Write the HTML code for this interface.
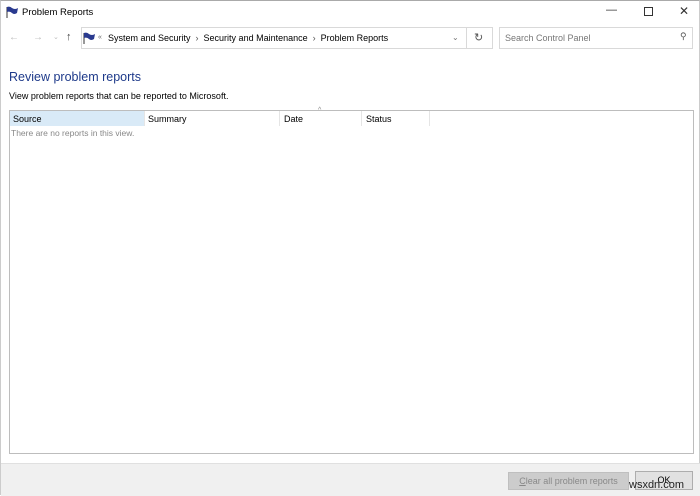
<!DOCTYPE html>
<html><head><style>
*{margin:0;padding:0;box-sizing:border-box}
body{width:700px;height:495px;overflow:hidden;background:#fff;font-family:"Liberation Sans",sans-serif;font-size:9px;color:#000;position:relative;border-top:1px solid #aaa;border-left:1px solid #ccc;border-right:1px solid #ccc}
.a{position:absolute}
</style></head><body>
<svg class="a" style="left:5px;top:5px" width="13" height="12" viewBox="0 0 13 12"><path d="M1 1 L1 12" stroke="#333" stroke-width="1"/><path d="M1 1 Q4 0 6 2 Q9 4 12 2 L11 7 Q8 9 6 7 Q4 5 1 6Z" fill="#2a3a8f"/></svg>
<div class="a" style="left:21px;top:6px;font-size:9.5px">Problem Reports</div>
<div class="a" style="left:605px;top:3px;font-size:11px;color:#333">—</div>
<div class="a" style="left:643px;top:6px;width:9px;height:9px;border:1px solid #333"></div>
<div class="a" style="left:678px;top:3px;font-size:12px;color:#333">✕</div>
<div class="a" style="left:8px;top:31px;color:#bbb;font-size:10px">←</div>
<div class="a" style="left:32px;top:31px;color:#bbb;font-size:10px">→</div>
<div class="a" style="left:52px;top:32px;color:#bbb;font-size:7px">⌄</div>
<div class="a" style="left:65px;top:30px;color:#444;font-size:11px">↑</div>
<div class="a" style="left:80px;top:26px;width:412px;height:22px;border:1px solid #d9d9d9"></div>
<div class="a" style="left:465px;top:26px;width:1px;height:22px;background:#d9d9d9"></div>
<svg class="a" style="left:82px;top:31px" width="13" height="12" viewBox="0 0 13 12"><path d="M1 1 L1 12" stroke="#333"/><path d="M1 1 Q4 0 6 2 Q9 4 12 2 L11 7 Q8 9 6 7 Q4 5 1 6Z" fill="#2a3a8f"/></svg>
<div class="a" style="left:97px;top:33px;font-size:7px;color:#666">«</div>
<div class="a" style="left:107px;top:32px">System and Security&nbsp; <span style="color:#555">›</span> &nbsp;Security and Maintenance&nbsp; <span style="color:#555">›</span> &nbsp;Problem Reports</div>
<div class="a" style="left:451px;top:32px;font-size:8px;color:#777">⌄</div>
<div class="a" style="left:473px;top:30px;font-size:11px;color:#555">↻</div>
<div class="a" style="left:498px;top:26px;width:194px;height:22px;border:1px solid #d9d9d9"></div>
<div class="a" style="left:504px;top:32px;color:#777">Search Control Panel</div>
<div class="a" style="left:679px;top:30px;font-size:9px;color:#555">⚲</div>
<div class="a" style="left:8px;top:69px;font-size:12.5px;color:#1e3a8a">Review problem reports</div>
<div class="a" style="left:8px;top:90px;font-size:9px">View problem reports that can be reported to Microsoft.</div>
<div class="a" style="left:8px;top:109px;width:685px;height:344px;border:1px solid #bdbdbd"></div>
<div class="a" style="left:9px;top:110px;width:134px;height:15px;background:#d9eaf7"></div>
<div class="a" style="left:143px;top:110px;width:1px;height:15px;background:#e5e5e5"></div>
<div class="a" style="left:278px;top:110px;width:1px;height:15px;background:#e5e5e5"></div>
<div class="a" style="left:360px;top:110px;width:1px;height:15px;background:#e5e5e5"></div>
<div class="a" style="left:428px;top:110px;width:1px;height:15px;background:#e5e5e5"></div>
<div class="a" style="left:12px;top:113px">Source</div>
<div class="a" style="left:147px;top:113px">Summary</div>
<div class="a" style="left:283px;top:113px">Date</div>
<div class="a" style="left:317px;top:106px;font-size:7px;color:#888">^</div>
<div class="a" style="left:365px;top:113px">Status</div>
<div class="a" style="left:10px;top:127px;color:#888;font-size:8.5px">There are no reports in this view.</div>
<div class="a" style="left:0;top:462px;width:700px;height:33px;background:#f0f0f0;border-top:1px solid #e0e0e0"></div>
<div class="a" style="left:507px;top:471px;width:121px;height:18px;background:#ccc;border:1px solid #bfbfbf;color:#888;text-align:center;line-height:16px"><u>C</u>lear all problem reports</div>
<div class="a" style="left:634px;top:470px;width:58px;height:19px;background:#e1e1e1;border:1px solid #adadad;text-align:center;line-height:17px">OK</div>
<div class="a" style="left:628px;top:478px;font-size:11px;color:#222">wsxdn.com</div>
</body></html>
